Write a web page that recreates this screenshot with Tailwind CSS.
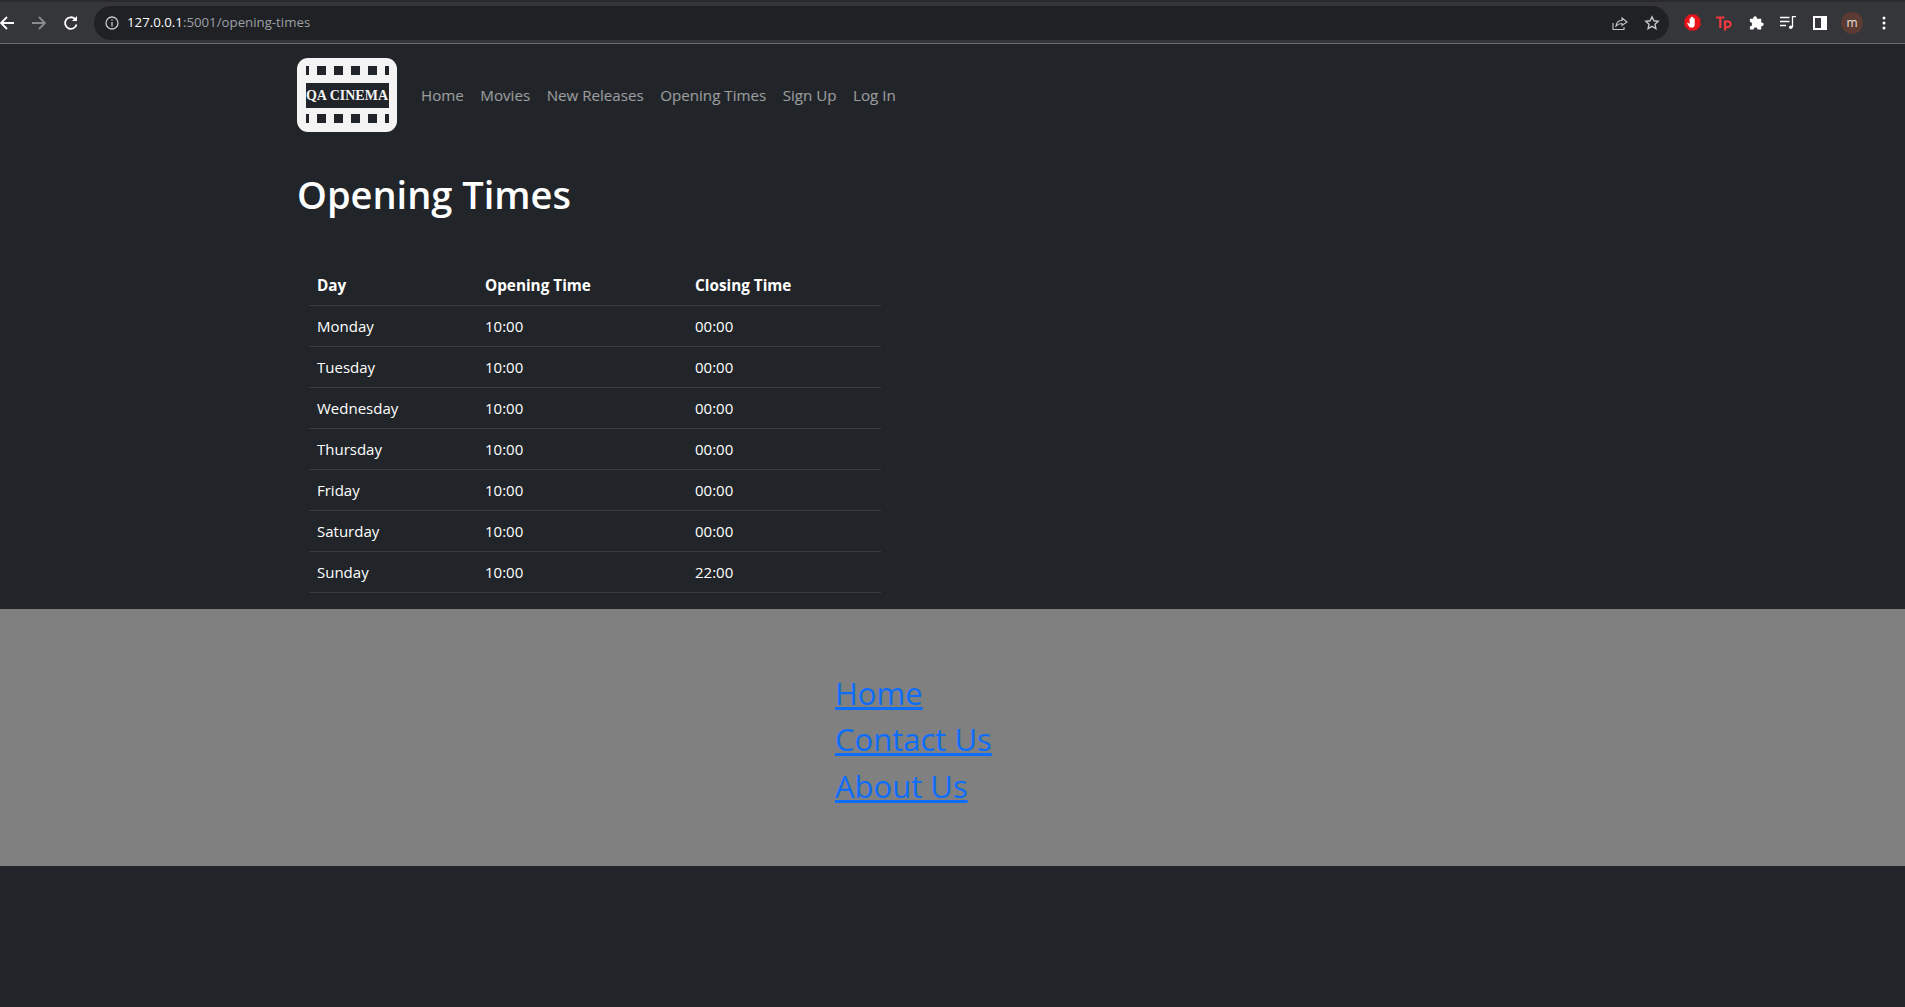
<!DOCTYPE html>
<html lang="en">
  <head>
    <meta charset="UTF-8" />
    <meta name="viewport" content="width=device-width, initial-scale=1.0" />
    <title>Opening Times</title>
    <script src="https://cdn.jsdelivr.net/npm/@tailwindcss/browser@4"></script>
  </head>
  <body class="bg-[#212529] min-h-screen font-['Open_Sans',sans-serif] text-white overflow-hidden">
    <!-- Browser toolbar -->
    <div class="h-[44px] bg-[#35363a] border-t-2 border-t-[#2a2a2a] border-b border-b-[#6a6a6a] flex items-center">
      <svg class="w-[16px] h-[16px] ml-[-1px]" viewBox="0 0 16 16" fill="none" stroke="#fff" stroke-width="1.8"><path d="M15 8H2M8 2L2 8l6 6" /></svg>
      <svg class="w-[16px] h-[16px] ml-[16px]" viewBox="0 0 16 16" fill="none" stroke="#8a8b8d" stroke-width="1.8"><path d="M1 8h13M8 2l6 6-6 6" /></svg>
      <svg class="w-[16px] h-[16px] ml-[16px]" viewBox="0 0 16 16" fill="none" stroke="#fff" stroke-width="1.8"><path d="M13.500 9.500A5.800 5.800 0 1 1 12 4" /><path d="M14 1v5H9" fill="#fff" stroke="none" /></svg>
      <div class="ml-[15px] h-[34px] w-[1575px] bg-[#202124] rounded-full flex items-center pl-[11px] pr-[9px]">
        <svg class="w-[14px] h-[14px]" viewBox="0 0 14 14" fill="none" stroke="#c4c6c9" stroke-width="1.3"><circle cx="7" cy="7" r="6" /><path d="M7 6v4.500M7 3.400v1.400" /></svg>
        <span class="ml-[8px] text-[13.250px] text-[#9aa0a6]"><span class="text-white">127.0.0.1</span>:5001/opening-times</span>
        <svg class="w-[16px] h-[16px] ml-auto" viewBox="0 0 16 16" fill="none" stroke="#c4c6c9" stroke-width="1.1"><path d="M1 8v6.500h11V12" /><path d="M4 11c.5-3.500 3-5.500 6-5.500V3l5 4-5 3.500V8.500c-2.500 0-4.500 1-6 2.500z" /></svg>
        <svg class="w-[16px] h-[16px] ml-[16px]" viewBox="0 0 16 16" fill="none" stroke="#c4c6c9" stroke-width="1.4"><path d="M8 1.800l1.900 4 4.300.5-3.200 3 .9 4.300L8 11.400l-3.900 2.200.9-4.300-3.200-3 4.300-.5z" /></svg>
      </div>
      <!-- Extensions -->
      <div class="ml-[7px] flex items-center">
        <div class="w-[32px] flex justify-center">
          <svg class="w-[17px] h-[17px]" viewBox="0 0 17 17"><path d="M5 .5h7L16.500 5v7L12 16.500H5L.5 12V5z" fill="#e8131b" /><path d="M6 13.500C4.800 12 3.600 10.500 3.200 9c.8-.6 1.600 0 2.400 1.200V5c0-1 1.200-1 1.200 0V3.600c0-1 1.300-1 1.300 0V3.400c0-1 1.300-1 1.300 0v1.400c0-.9 1.300-.9 1.300 0v5.700c0 1.500-.6 2.400-1.400 3z" fill="#fff" /></svg>
        </div>
        <div class="w-[32px] flex justify-center">
          <svg class="w-[16px] h-[16px]" viewBox="0 0 16 16" fill="none" stroke="#f0383e" stroke-width="2.200"><path d="M0 2.500h8.500M4.300 2.500V13" /><path d="M9 15.500V6.500h2.800a2.600 2.600 0 0 1 0 5.600H9" /></svg>
        </div>
        <div class="w-[32px] flex justify-center">
          <svg class="w-[15px] h-[15px]" viewBox="0 0 16 16" fill="#fff"><path d="M1 4h3.500C4 .3 9 .3 8.500 4H13v4c3.500-.5 3.500 4.500 0 4v3.500H9c.5-3-4.500-3-4 0H1V12c3 .5 3-5 0-4.500z" /></svg>
        </div>
        <div class="w-[32px] flex justify-center">
          <svg class="w-[16px] h-[14px]" viewBox="0 0 16 14" fill="none" stroke="#fff" stroke-width="1.300"><path d="M0 1.500h9.500M0 5.500h9.500M0 9.500h6M12.500 11V.5H16" /><circle cx="10.800" cy="11.200" r="1.800" fill="#fff" stroke="none" /></svg>
        </div>
        <div class="w-[32px] flex justify-center">
          <div class="w-[14px] h-[14px] border-2 border-white border-r-[6px]"></div>
        </div>
        <div class="w-[32px] flex justify-center">
          <div class="w-[22px] h-[22px] rounded-full bg-[#5b3b32] flex items-center justify-center text-[12px] text-[#e8e2df]">m</div>
        </div>
        <div class="w-[32px] flex justify-center">
          <svg class="w-[4px] h-[14px]" viewBox="0 0 4 14" fill="#fff"><circle cx="2" cy="2" r="1.500" /><circle cx="2" cy="7" r="1.500" /><circle cx="2" cy="12" r="1.500" /></svg>
        </div>
      </div>
    </div>

    <main class="pl-[297px]">
      <!-- Navbar -->
      <nav class="flex items-center h-[74px] mt-[14px]">
        <div class="relative w-[100px] h-[74px] bg-[#f4f4f4] rounded-[11px] flex items-center justify-center overflow-hidden">
          <div class="absolute top-[8px] left-[9px] w-[83px] flex justify-between">
            <i class="w-[3px] h-[9px] bg-[#212529]"></i><i class="w-[9px] h-[9px] bg-[#212529]"></i><i class="w-[9px] h-[9px] bg-[#212529]"></i><i class="w-[9px] h-[9px] bg-[#212529]"></i><i class="w-[9px] h-[9px] bg-[#212529]"></i><i class="w-[4px] h-[9px] bg-[#212529]"></i>
          </div>
          <div class="w-[83px] h-[25px] bg-[#212529] text-[#f4f4f4] flex items-center justify-center font-['Liberation_Serif',serif] font-bold text-[14px] whitespace-nowrap">QA CINEMA</div>
          <div class="absolute bottom-[9px] left-[9px] w-[83px] flex justify-between">
            <i class="w-[3px] h-[9px] bg-[#212529]"></i><i class="w-[9px] h-[9px] bg-[#212529]"></i><i class="w-[9px] h-[9px] bg-[#212529]"></i><i class="w-[9px] h-[9px] bg-[#212529]"></i><i class="w-[9px] h-[9px] bg-[#212529]"></i><i class="w-[4px] h-[9px] bg-[#212529]"></i>
          </div>
        </div>
        <ul class="flex ml-[24px] gap-[16.500px] text-[15.150px] text-white/55">
          <li><a href="#">Home</a></li>
          <li><a href="#">Movies</a></li>
          <li><a href="#">New Releases</a></li>
          <li><a href="#">Opening Times</a></li>
          <li><a href="#">Sign Up</a></li>
          <li><a href="#">Log In</a></li>
        </ul>
      </nav>

      <h1 class="text-[38px] leading-[48px] font-semibold mt-[38px]">Opening Times</h1>

      <!-- Opening times table -->
      <table class="ml-[12px] mt-[46px] w-[572px] table-fixed text-[15px] border-collapse">
        <colgroup><col class="w-[168px]" /><col class="w-[210px]" /><col /></colgroup>
        <thead>
          <tr class="h-[41px] border-b border-[#373b3e] text-left text-[15.300px]"><th class="pl-[8px] pt-[2px] font-bold">Day</th><th class="pl-[8px] pt-[2px] font-bold">Opening Time</th><th class="pl-[8px] pt-[2px] font-bold">Closing Time</th></tr>
        </thead>
        <tbody>
          <tr class="h-[41px] border-b border-[#373b3e]"><td class="pl-[8px] pt-[2px]">Monday</td><td class="pl-[8px] pt-[2px]">10:00</td><td class="pl-[8px] pt-[2px]">00:00</td></tr>
          <tr class="h-[41px] border-b border-[#373b3e]"><td class="pl-[8px] pt-[2px]">Tuesday</td><td class="pl-[8px] pt-[2px]">10:00</td><td class="pl-[8px] pt-[2px]">00:00</td></tr>
          <tr class="h-[41px] border-b border-[#373b3e]"><td class="pl-[8px] pt-[2px]">Wednesday</td><td class="pl-[8px] pt-[2px]">10:00</td><td class="pl-[8px] pt-[2px]">00:00</td></tr>
          <tr class="h-[41px] border-b border-[#373b3e]"><td class="pl-[8px] pt-[2px]">Thursday</td><td class="pl-[8px] pt-[2px]">10:00</td><td class="pl-[8px] pt-[2px]">00:00</td></tr>
          <tr class="h-[41px] border-b border-[#373b3e]"><td class="pl-[8px] pt-[2px]">Friday</td><td class="pl-[8px] pt-[2px]">10:00</td><td class="pl-[8px] pt-[2px]">00:00</td></tr>
          <tr class="h-[41px] border-b border-[#373b3e]"><td class="pl-[8px] pt-[2px]">Saturday</td><td class="pl-[8px] pt-[2px]">10:00</td><td class="pl-[8px] pt-[2px]">00:00</td></tr>
          <tr class="h-[41px] border-b border-[#373b3e]"><td class="pl-[8px] pt-[2px]">Sunday</td><td class="pl-[8px] pt-[2px]">10:00</td><td class="pl-[8px] pt-[2px]">22:00</td></tr>
        </tbody>
      </table>
    </main>

    <!-- Footer -->
    <footer class="mt-[16px] h-[257px] bg-[#808080] pl-[835px] pt-[61px]">
      <ul class="text-[31px] leading-[46.500px] font-medium text-[#0d6efd] underline">
        <li><a href="#">Home</a></li>
        <li><a href="#">Contact Us</a></li>
        <li><a href="#">About Us</a></li>
      </ul>
    </footer>
  </body>
</html>
